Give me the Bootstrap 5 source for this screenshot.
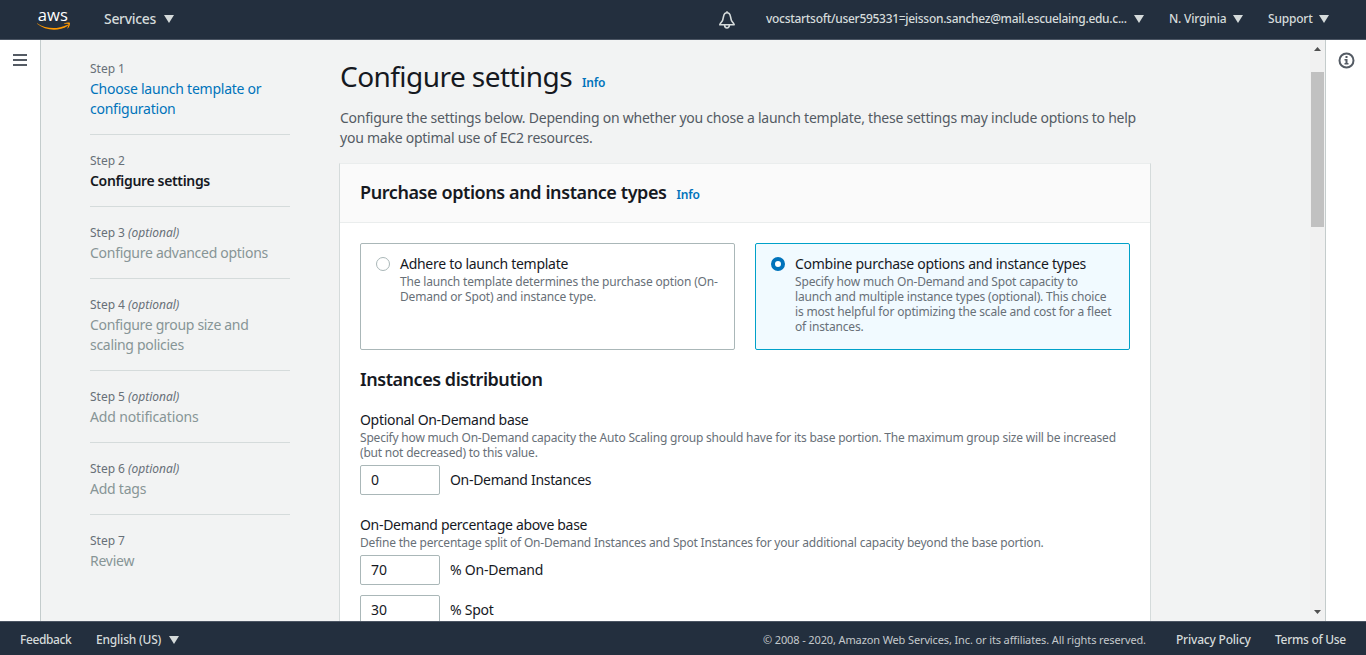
<!DOCTYPE html>
<html lang="en">
<head>
<meta charset="utf-8">
<meta name="viewport" content="width=device-width, initial-scale=1">
<title>Create Auto Scaling group</title>
<link rel="stylesheet" href="https://cdn.jsdelivr.net/npm/bootstrap@5.3.0/dist/css/bootstrap.min.css">
<style>
body{height:100vh;overflow:hidden;font-family:"Noto Sans",sans-serif;font-size:14px;line-height:20px;letter-spacing:-.242px;color:#16191f;background:#fff}
a{text-decoration:none;color:#0073bb}
.topbar{height:40px;background:#232f3e;border-bottom:1px solid #4b5563;padding:0 37px 1px}
.topbar,.footbar{color:#d5dbdb;font-size:12px;font-weight:500;letter-spacing:-.2px;white-space:nowrap}
.topbar a,.footbar a{color:inherit}
.services{font-size:14px;letter-spacing:-.31px;margin-left:34px}
.tri{width:10px;height:8px;fill:#d5dbdb;flex:none;display:block}
.user{width:361px;letter-spacing:-.3px}
.w-region{width:57px}.w-support{width:45px}
.footbar{height:34px;background:#232f3e;border-top:1px solid #4b5563;padding:3px 20px 0}
.copyright{font-size:11px;font-weight:400;letter-spacing:-.125px;width:383px;margin-right:30px;color:#c3c9cc}
.rail{width:41px;padding-top:13px;flex:none}
.rail-left{border-right:1px solid #c4cccc;padding-left:13px}
.rail-right{border-left:1px solid #c4cccc;padding:12px 0 0 12px}
.canvas{background:#f2f3f3;overflow:hidden;min-width:0}
.steps{width:200px;margin:18px 49px 0 49px;flex:none}
.steps li{padding-bottom:15px;border-bottom:1px solid #d5dbdb;margin-bottom:15px;color:#879596}
.steps li:last-child{border:0}
.step-no{font-size:12px;line-height:21px;letter-spacing:-.02px;color:#687078}
.steps .current{color:#16191f;font-weight:600;letter-spacing:-.34px}
.main-col{width:812px;margin-top:18px;flex:none}
h1{font-size:28px;line-height:36px;letter-spacing:-.555px;font-weight:400;margin:0}
.info{font-size:12px;font-weight:600;letter-spacing:-.2px;margin-left:10px}
.intro{color:#545b64;margin:14px 0 15px;padding-left:1px}
.panel{border:1px solid #d5dbdb;border-top-color:#eaeded;background:#fff;height:600px}
.panel-head{background:#fafafa;border-bottom:1px solid #eaeded;height:59px;padding:16px 20px}
h2{font-size:18px;line-height:24px;font-weight:600;letter-spacing:-.41px;margin:0}
.panel-fill{padding:20px}
.tile{border:1px solid #aab7b8;border-radius:2px;height:107px;padding:10px 15px;flex:1 1 0;min-width:0}
.tile.chosen{background:#f1faff;border-color:#00a1c9}
.tile-name{letter-spacing:-.285px}
.radio{width:14px;height:14px;border:1px solid #aab7b8;border-radius:50%;margin-top:3px;flex:none;background:#fff}
.chosen .radio{border:4.5px solid #0073bb}
.hint{font-size:12px;line-height:15px;letter-spacing:-.2px;color:#687078}
.tile .hint{letter-spacing:-.17px}
.qty{width:80px;height:30px;border:1px solid #aab7b8;border-radius:2px;padding:0 10px 2px;font:inherit;color:inherit;letter-spacing:0}
.field-name{letter-spacing:-.31px}
.scrollbar{width:15px;background:#f1f1f1;flex:none}
.thumb{width:13px;height:155px;background:#c1c1c1;margin-top:21px}
</style>
</head>
<body class="d-flex flex-column">
<nav class="topbar d-flex align-items-center flex-shrink-0">
  <a href="#" aria-label="aws"><svg class="d-block" style="margin-top:-1px" width="33" height="24" viewBox="0 -2 33 24" overflow="visible"><text x="0.800" y="12.200" font-family="Open Sans" font-size="17" font-weight="500" fill="#fff" letter-spacing="0" textLength="30" lengthAdjust="spacingAndGlyphs">aws</text><path d="M0 14.200c9.500 6 20.300 6.200 30 1.700 1-.4 1.300.5.6 1C21.500 22.600 8.500 21.800 0 14.800z" fill="#f90"/><path d="M27.200 14.300c1.800-1 4.900-1.200 5.600-.5.600.7-.2 4-2 5.600l-.5-.2c.7-1.700 1.400-3.500 1-4-.5-.5-2.500-.4-4-.3z" fill="#f90"/></svg></a>
  <a href="#" class="services d-flex align-items-center"><span style="width:52px">Services</span><svg class="tri ms-2" viewBox="0 0 10 8"><path d="M0 0h10L5 8z"/></svg></a>
  <div class="ms-auto d-flex align-items-center">
    <svg class="d-block" style="margin:2px 30px 0 0" width="18" height="18" viewBox="0 0 18 18" fill="none" stroke="#d5dbdb" stroke-width="1.600" stroke-linejoin="round"><path d="M9 1.800C6.800 1.800 5.900 3.600 5.500 5.600L4.700 9.200C4.400 10.600 2.600 11.500 1.800 13.700h14.400c-.8-2.200-2.600-3.100-2.900-4.500l-.8-3.600C12.100 3.600 11.200 1.800 9 1.800z"/><path d="M9 .3v1.500M6.600 14c0 3.900 4.800 3.900 4.800 0"/></svg>
    <a href="#" class="d-flex align-items-center"><span class="user">vocstartsoft/user595331=jeisson.sanchez@mail.escuelaing.edu.c...</span><svg class="tri" style="margin-left:7px" viewBox="0 0 10 8"><path d="M0 0h10L5 8z"/></svg></a>
    <a href="#" class="d-flex align-items-center" style="margin-left:25px"><span class="w-region">N. Virginia</span><svg class="tri" style="margin-left:7px" viewBox="0 0 10 8"><path d="M0 0h10L5 8z"/></svg></a>
    <a href="#" class="d-flex align-items-center" style="margin-left:25px"><span class="w-support">Support</span><svg class="tri" style="margin-left:6px" viewBox="0 0 10 8"><path d="M0 0h10L5 8z"/></svg></a>
  </div>
</nav>
<div class="d-flex flex-grow-1 overflow-hidden">
  <aside class="rail rail-left"><svg class="d-block" width="14" height="14" viewBox="0 0 14 14" fill="#545b64"><path d="M0 1h14v2H0zM0 6h14v2H0zM0 11h14v2H0z"/></svg></aside>
  <main class="canvas d-flex flex-grow-1">
    <ul class="steps list-unstyled">
      <li><div class="step-no">Step 1</div><a href="#">Choose launch template or configuration</a></li>
      <li><div class="step-no">Step 2</div><div class="current">Configure settings</div></li>
      <li><div class="step-no">Step 3 <i>(optional)</i></div><span style="letter-spacing:-.28px">Configure advanced options</span></li>
      <li><div class="step-no">Step 4 <i>(optional)</i></div><span style="letter-spacing:-.3px">Configure group size and<br>scaling policies</span></li>
      <li><div class="step-no">Step 5 <i>(optional)</i></div><span style="letter-spacing:-.15px">Add notifications</span></li>
      <li><div class="step-no">Step 6 <i>(optional)</i></div>Add tags</li>
      <li><div class="step-no">Step 7</div>Review</li>
    </ul>
    <div class="main-col">
      <div class="d-flex align-items-baseline ps-1"><h1 style="margin-left:-3px">Configure settings</h1><a href="#" class="info">Info</a></div>
      <p class="intro">Configure the settings below. Depending on whether you chose a launch template, these settings may include options to help<br>you make optimal use of EC2 resources.</p>
      <section class="panel">
        <div class="panel-head d-flex align-items-baseline"><h2>Purchase options and instance types</h2><a href="#" class="info">Info</a></div>
        <div class="panel-fill">
          <div class="d-flex" style="gap:20px">
            <label class="tile d-flex"><span class="radio"></span><span style="margin-left:10px"><span class="tile-name d-block">Adhere to launch template</span><span class="hint d-block text-nowrap">The launch template determines the purchase option (On-<br>Demand or Spot) and instance type.</span></span></label>
            <label class="tile chosen d-flex"><span class="radio"></span><span style="margin-left:10px"><span class="tile-name d-block">Combine purchase options and instance types</span><span class="hint d-block text-nowrap">Specify how much On-Demand and Spot capacity to<br>launch and multiple instance types (optional). This choice<br>is most helpful for optimizing the scale and cost for a fleet<br>of instances.</span></span></label>
          </div>
          <h2 style="margin:17px 0 19px;letter-spacing:-.46px">Instances distribution</h2>
          <label class="field-name d-block">Optional On-Demand base</label>
          <div class="hint">Specify how much On-Demand capacity the Auto Scaling group should have for its base portion. The maximum group size will be increased<br>(but not decreased) to this value.</div>
          <div class="d-flex align-items-center" style="gap:10px;margin-top:5px"><input class="qty" value="0"><span class="field-name">On-Demand Instances</span></div>
          <label class="field-name d-block" style="margin-top:20px">On-Demand percentage above base</label>
          <div class="hint">Define the percentage split of On-Demand Instances and Spot Instances for your additional capacity beyond the base portion.</div>
          <div class="d-flex align-items-center" style="gap:10px;margin-top:5px"><input class="qty" value="70"><span>% On-Demand</span></div>
          <div class="d-flex align-items-center" style="gap:10px;margin-top:10px"><input class="qty" value="30"><span>% Spot</span></div>
        </div>
      </section>
    </div>
    <div class="scrollbar ms-auto d-flex flex-column align-items-center">
      <svg class="flex-shrink-0" style="margin-top:7px" width="7" height="4" viewBox="0 0 7 4"><path d="M0 4h7L3.500 0z" fill="#505050"/></svg>
      <div class="thumb flex-shrink-0"></div>
      <svg class="mt-auto" style="margin-bottom:7px" width="7" height="4" viewBox="0 0 7 4"><path d="M0 0h7L3.500 4z" fill="#505050"/></svg>
    </div>
  </main>
  <aside class="rail rail-right"><svg class="d-block" width="17" height="17" viewBox="0 0 17 17"><circle cx="8.500" cy="8.500" r="7" fill="none" stroke="#545b64" stroke-width="2"/><path d="M7.500 4h2v2h-2zM6.500 7h3v4h1v1.500h-4V11h1V8.500h-1z" fill="#545b64"/></svg></aside>
</div>
<footer class="footbar d-flex align-items-center flex-shrink-0">
  <a href="#" style="width:51px;letter-spacing:-.4px">Feedback</a>
  <a href="#" class="d-flex align-items-center" style="margin-left:25px;margin-top:-1px"><span style="width:66px">English (US)</span><svg class="tri" style="margin-left:7px" viewBox="0 0 10 8"><path d="M0 0h10L5 8z"/></svg></a>
  <span class="copyright ms-auto">© 2008 - 2020, Amazon Web Services, Inc. or its affiliates. All rights reserved.</span>
  <a href="#" style="width:75px;margin-right:24px">Privacy Policy</a>
  <a href="#" style="width:71px;letter-spacing:-.3px">Terms of Use</a>
</footer>
<script src="https://cdn.jsdelivr.net/npm/bootstrap@5.3.0/dist/js/bootstrap.bundle.min.js"></script>
</body>
</html>
